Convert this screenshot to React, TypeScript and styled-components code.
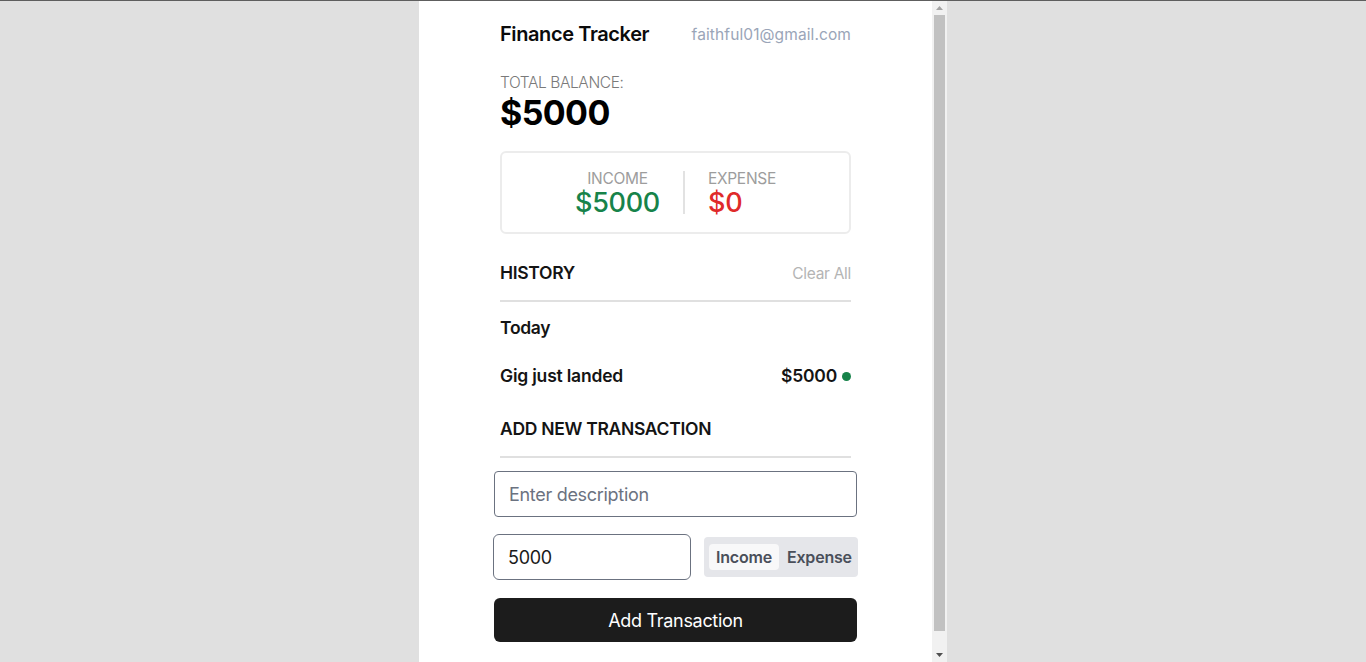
import React, { useState } from 'react';
import styled, { createGlobalStyle } from 'styled-components';

const GlobalStyle = createGlobalStyle`
  html, body {
    margin: 0;
    padding: 0;
  }

  body {
    background-color: #e0e0e0;
    border-top: 1px solid #5e5e5e;
    font-family: Inter, "Noto Sans", sans-serif;
    overflow: hidden;
  }
`;

const Page = styled.div`
  height: calc(100vh - 1px);
  display: flex;
  justify-content: center;
`;

const Panel = styled.div`
  width: 528px;
  height: 100%;
  display: flex;
  background-color: #ffffff;
`;

const Viewport = styled.div`
  flex: 1;
  overflow: hidden;
`;

const ScrollTrack = styled.div`
  width: 15px;
  display: flex;
  flex-direction: column;
  background-color: #f1f1f1;
`;

const ScrollArrow = styled.div<{ enabled: boolean }>`
  height: 14px;
  display: flex;
  justify-content: center;
  align-items: center;
  fill: ${(props) => (props.enabled ? '#505050' : '#a3a3a3')};
`;

const ScrollThumb = styled.div`
  height: 616px;
  margin: 0 2px;
  background-color: #c1c1c1;
`;

const ScrollRest = styled.div`
  flex: 1;
`;

const Content = styled.div`
  width: 351px;
  margin: 0 auto;
  padding: 19px 0 35px;
  display: flex;
  flex-direction: column;
`;

const Header = styled.header`
  height: 28px;
  display: flex;
  justify-content: space-between;
  align-items: center;
`;

const AppTitle = styled.h1`
  margin: 0;
  color: #0b0b0b;
  font-size: 20px;
  font-weight: 600;
  letter-spacing: -0.4px;
`;

const Email = styled.span`
  color: #9aa5b8;
  font-size: 15.5px;
  font-weight: 400;
  letter-spacing: 0.1px;
`;

const BalanceLabel = styled.span`
  margin-top: 25px;
  line-height: 20px;
  color: #7a7a7a;
  font-size: 15.5px;
  font-weight: 300;
  letter-spacing: -0.4px;
  text-transform: uppercase;
`;

const BalanceValue = styled.span`
  line-height: 40px;
  color: #000000;
  font-size: 34px;
  font-weight: 700;
  letter-spacing: -0.6px;
`;

const SummaryCard = styled.div`
  margin-top: 18px;
  height: 83px;
  box-sizing: border-box;
  border: 2px solid #ececec;
  border-radius: 6px;
  display: flex;
  justify-content: center;
  align-items: center;
  gap: 23px;
`;

const SummaryColumn = styled.div<{ align: 'center' | 'flex-start' }>`
  display: flex;
  flex-direction: column;
  align-items: ${(props) => props.align};
`;

const SummaryLabel = styled.span`
  line-height: 20px;
  color: #9d9d9d;
  font-size: 15.5px;
  font-weight: 400;
  letter-spacing: -0.3px;
`;

const SummaryValue = styled.span<{ tone: 'income' | 'expense' }>`
  line-height: 28px;
  color: ${(props) => (props.tone === 'income' ? '#17834a' : '#df2a2a')};
  font-size: 27px;
  font-weight: 500;
  letter-spacing: -0.3px;
`;

const Divider = styled.div`
  width: 2px;
  height: 43px;
  background-color: #e2e2e2;
`;

const SectionHeader = styled.div<{ gap: number }>`
  margin-top: ${(props) => props.gap}px;
  padding-bottom: 15px;
  border-bottom: 2px solid #e0e0e0;
  line-height: 24px;
  display: flex;
  justify-content: space-between;
  align-items: center;
`;

const SectionTitle = styled.span`
  color: #141414;
  font-size: 17.5px;
  font-weight: 600;
  letter-spacing: -0.3px;
`;

const ClearButton = styled.button`
  padding: 0;
  border: 0;
  background: none;
  color: #b4b4b4;
  font-family: inherit;
  font-size: 15.5px;
  letter-spacing: -0.3px;
  cursor: pointer;
`;

const DayLabel = styled.span`
  margin-top: 14px;
  line-height: 24px;
  color: #141414;
  font-size: 17.5px;
  font-weight: 600;
  letter-spacing: -0.3px;
`;

const HistoryItem = styled.div`
  margin-top: 24px;
  line-height: 24px;
  display: flex;
  justify-content: space-between;
  align-items: center;
  color: #141414;
  font-size: 17.5px;
  font-weight: 600;
  letter-spacing: -0.2px;
`;

const Amount = styled.span`
  display: flex;
  align-items: center;
  gap: 5px;
`;

const Dot = styled.span<{ tone: 'income' | 'expense' }>`
  width: 9px;
  height: 9px;
  border-radius: 50%;
  background-color: ${(props) => (props.tone === 'income' ? '#17834a' : '#df2a2a')};
`;

const Form = styled.form`
  margin: 13px -6px 0;
  display: flex;
  flex-direction: column;
`;

const TextInput = styled.input`
  height: 46px;
  box-sizing: border-box;
  padding: 0 14px;
  border: 1px solid #6b7280;
  border-radius: 4px;
  color: #1a1a1a;
  font-family: inherit;
  font-size: 18px;
  letter-spacing: -0.3px;
  outline: none;

  &::placeholder {
    color: #6b7280;
  }
`;

const FormRow = styled.div`
  margin: 17px -1px 0;
  display: flex;
  align-items: center;
  justify-content: space-between;
`;

const AmountInput = styled(TextInput)`
  width: 198px;
  border-radius: 6px;
`;

const Toggle = styled.div`
  width: 154px;
  height: 40px;
  box-sizing: border-box;
  padding: 0 2px 0 5px;
  display: flex;
  align-items: center;
  gap: 1px;
  background-color: #e5e6ea;
  border-radius: 4px;
`;

const ToggleOption = styled.button<{ active: boolean }>`
  height: 26px;
  padding: 0 7px;
  border: 0;
  border-radius: 4px;
  background-color: ${(props) => (props.active ? '#f8f8f9' : 'transparent')};
  color: #4a4f5a;
  font-family: inherit;
  font-size: 16px;
  font-weight: 600;
  letter-spacing: -0.2px;
  white-space: nowrap;
  cursor: pointer;
`;

const SubmitButton = styled.button`
  margin-top: 18px;
  height: 44px;
  border: 0;
  border-radius: 6px;
  background-color: #1c1c1c;
  color: #ffffff;
  font-family: inherit;
  font-size: 18px;
  font-weight: 400;
  letter-spacing: -0.3px;
  cursor: pointer;
`;

function App(): JSX.Element {
  const [type, setType] = useState<'income' | 'expense'>('income');
  const [amount, setAmount] = useState<string>('5000');
  const [description, setDescription] = useState<string>('');

  return (
    <Page>
      <GlobalStyle />
      <Panel>
        <Viewport>
          <Content>
            <Header>
              <AppTitle>Finance Tracker</AppTitle>
              <Email>faithful01@gmail.com</Email>
            </Header>

            <BalanceLabel>Total Balance:</BalanceLabel>
            <BalanceValue>$5000</BalanceValue>

            <SummaryCard>
              <SummaryColumn align="center">
                <SummaryLabel>INCOME</SummaryLabel>
                <SummaryValue tone="income">$5000</SummaryValue>
              </SummaryColumn>
              <Divider />
              <SummaryColumn align="flex-start">
                <SummaryLabel>EXPENSE</SummaryLabel>
                <SummaryValue tone="expense">$0</SummaryValue>
              </SummaryColumn>
            </SummaryCard>

            <SectionHeader gap={27}>
              <SectionTitle>HISTORY</SectionTitle>
              <ClearButton type="button">Clear All</ClearButton>
            </SectionHeader>

            <DayLabel>Today</DayLabel>
            <HistoryItem>
              <span>Gig just landed</span>
              <Amount>
                $5000
                <Dot tone="income" />
              </Amount>
            </HistoryItem>

            <SectionHeader gap={29}>
              <SectionTitle>ADD NEW TRANSACTION</SectionTitle>
            </SectionHeader>

            <Form onSubmit={(e) => e.preventDefault()}>
              <TextInput
                placeholder="Enter description"
                value={description}
                onChange={(e) => setDescription(e.target.value)}
              />
              <FormRow>
                <AmountInput value={amount} onChange={(e) => setAmount(e.target.value)} />
                <Toggle>
                  <ToggleOption type="button" active={type === 'income'} onClick={() => setType('income')}>
                    Income
                  </ToggleOption>
                  <ToggleOption type="button" active={type === 'expense'} onClick={() => setType('expense')}>
                    Expense
                  </ToggleOption>
                </Toggle>
              </FormRow>
              <SubmitButton type="submit">Add Transaction</SubmitButton>
            </Form>
          </Content>
        </Viewport>

        <ScrollTrack>
          <ScrollArrow enabled={false}>
            <svg width="7" height="4" viewBox="0 0 7 4">
              <polygon points="3.5,0 7,4 0,4" />
            </svg>
          </ScrollArrow>
          <ScrollThumb />
          <ScrollRest />
          <ScrollArrow enabled>
            <svg width="7" height="4" viewBox="0 0 7 4">
              <polygon points="0,0 7,0 3.5,4" />
            </svg>
          </ScrollArrow>
        </ScrollTrack>
      </Panel>
    </Page>
  );
}

export default App;
